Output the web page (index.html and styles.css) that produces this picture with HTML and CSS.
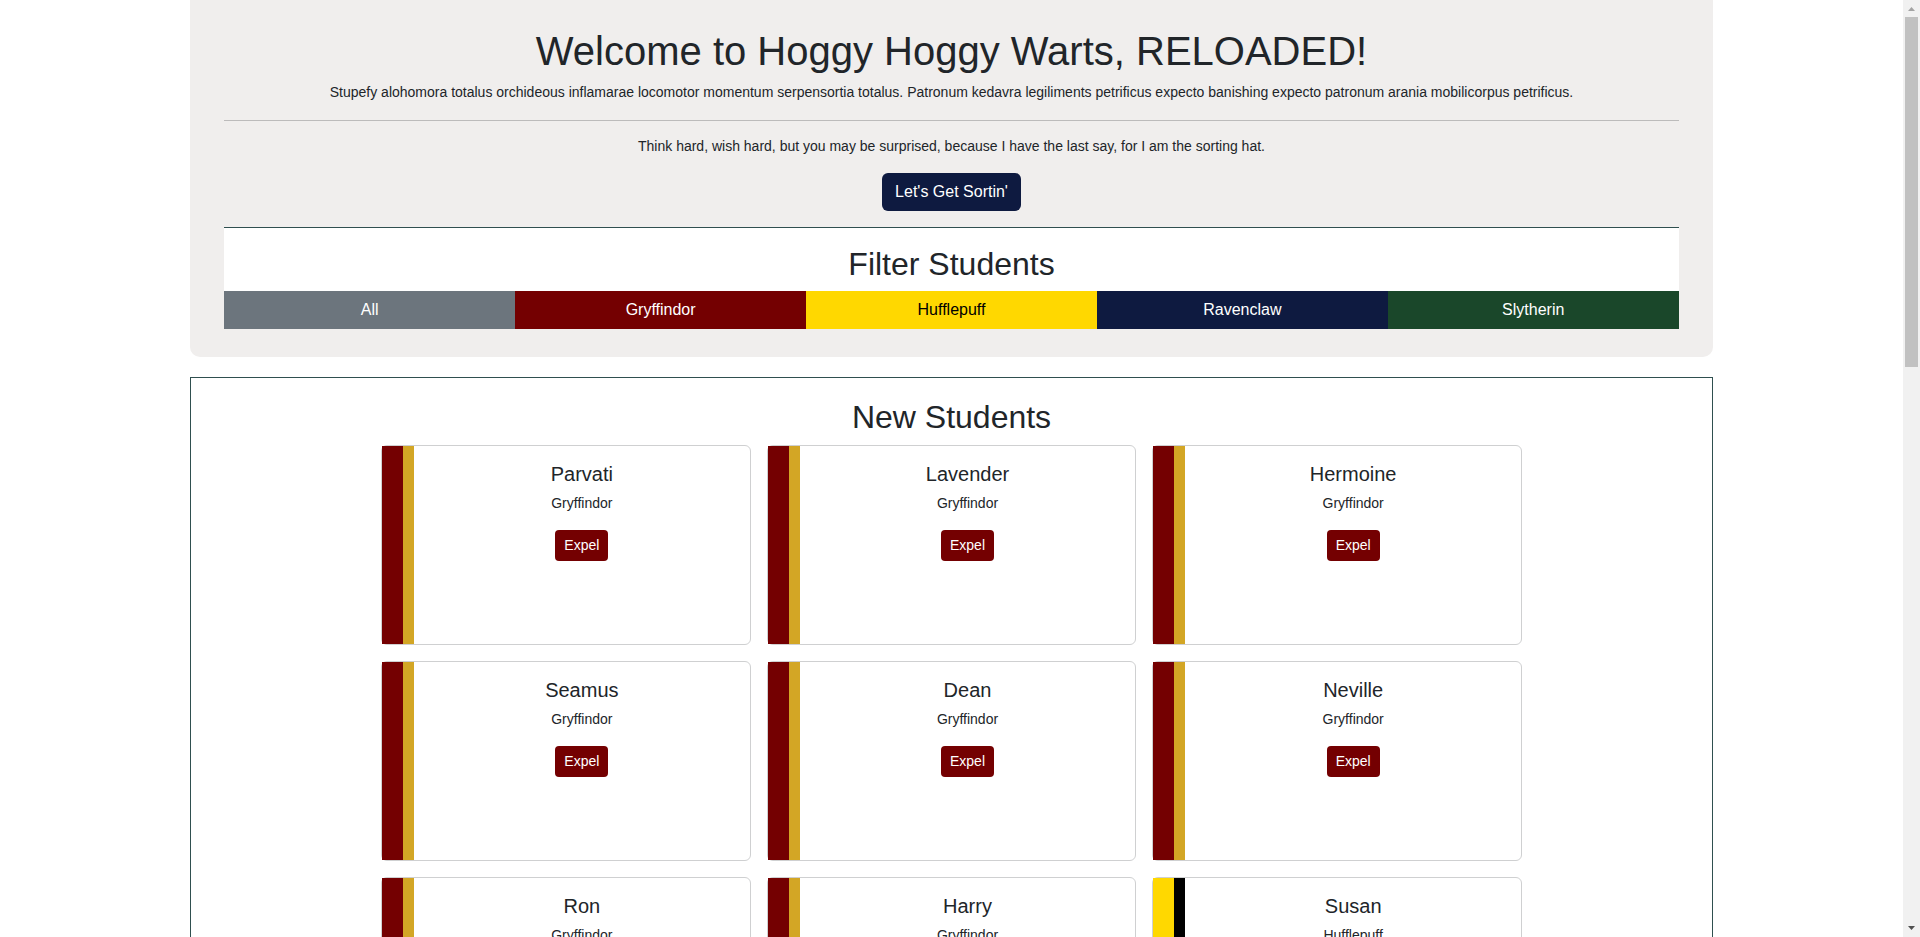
FILE: index.html
```html
<!DOCTYPE html>
<html lang="en">
<head>
  <meta charset="utf-8">
  <meta name="viewport" content="width=device-width, initial-scale=1">
  <title>Hoggy Hoggy Warts</title>
  <link rel="stylesheet" href="styles.css">
</head>
<body>
  <div class="viewport">
    <main class="page">
      <header class="hero">
        <h1 class="hero-title">Welcome to Hoggy Hoggy Warts, RELOADED!</h1>
        <p class="text">Stupefy alohomora totalus orchideous inflamarae locomotor momentum serpensortia totalus. Patronum kedavra legiliments petrificus expecto banishing expecto patronum arania mobilicorpus petrificus.</p>
        <hr class="divider">
        <p class="text">Think hard, wish hard, but you may be surprised, because I have the last say, for I am the sorting hat.</p>
        <button type="button" class="btn btn-sort">Let's Get Sortin'</button>
        <section class="filter">
          <h2 class="section-title">Filter Students</h2>
          <div class="filter-buttons">
            <button type="button" class="btn all">All</button>
            <button type="button" class="btn gryffindor">Gryffindor</button>
            <button type="button" class="btn hufflepuff">Hufflepuff</button>
            <button type="button" class="btn ravenclaw">Ravenclaw</button>
            <button type="button" class="btn slytherin">Slytherin</button>
          </div>
        </section>
      </header>

      <section class="students">
        <h2 class="section-title">New Students</h2>
        <div class="cards">
          <article class="card card-gryffindor">
            <div class="card-body"><h3 class="card-title">Parvati</h3><p class="text">Gryffindor</p><button type="button" class="btn-expel">Expel</button></div>
          </article>
          <article class="card card-gryffindor">
            <div class="card-body"><h3 class="card-title">Lavender</h3><p class="text">Gryffindor</p><button type="button" class="btn-expel">Expel</button></div>
          </article>
          <article class="card card-gryffindor">
            <div class="card-body"><h3 class="card-title">Hermoine</h3><p class="text">Gryffindor</p><button type="button" class="btn-expel">Expel</button></div>
          </article>
          <article class="card card-gryffindor">
            <div class="card-body"><h3 class="card-title">Seamus</h3><p class="text">Gryffindor</p><button type="button" class="btn-expel">Expel</button></div>
          </article>
          <article class="card card-gryffindor">
            <div class="card-body"><h3 class="card-title">Dean</h3><p class="text">Gryffindor</p><button type="button" class="btn-expel">Expel</button></div>
          </article>
          <article class="card card-gryffindor">
            <div class="card-body"><h3 class="card-title">Neville</h3><p class="text">Gryffindor</p><button type="button" class="btn-expel">Expel</button></div>
          </article>
          <article class="card card-gryffindor">
            <div class="card-body"><h3 class="card-title">Ron</h3><p class="text">Gryffindor</p><button type="button" class="btn-expel">Expel</button></div>
          </article>
          <article class="card card-gryffindor">
            <div class="card-body"><h3 class="card-title">Harry</h3><p class="text">Gryffindor</p><button type="button" class="btn-expel">Expel</button></div>
          </article>
          <article class="card card-hufflepuff">
            <div class="card-body"><h3 class="card-title">Susan</h3><p class="text">Hufflepuff</p><button type="button" class="btn-expel">Expel</button></div>
          </article>
        </div>
      </section>
    </main>
    <div class="scrollbar" aria-hidden="true">
      <svg class="arrow" viewBox="0 0 17 17"><path d="M5 11h7L8.500 7z" fill="#a3a3a3"/></svg>
      <div class="thumb"></div>
      <svg class="arrow arrow-down" viewBox="0 0 17 17"><path d="M5 6h7L8.500 10z" fill="#505050"/></svg>
    </div>
  </div>
</body>
</html>
```
FILE: styles.css
```css
*,
*::before {
  box-sizing: border-box;
}

body {
  margin: 0;
  background: #fff;
  color: #212529;
  font-family: "Liberation Sans", Arial, sans-serif;
  font-size: 14px;
  line-height: 18px;
}

.viewport {
  display: grid;
  grid-template-columns: 1fr 17px;
  height: 100vh;
}

.page {
  overflow-y: auto;
  scrollbar-width: none;
  padding: 0 10%;
}

.hero {
  padding: 27px 34px 28px;
  margin-bottom: 20px;
  border-radius: 0 0 10px 10px;
  background: #f0eeed;
  text-align: center;
}

.hero-title {
  margin: 0 0 8px;
  font-size: 40px;
  font-weight: 400;
  line-height: 48px;
}

.text {
  margin: 0 0 18px;
}

.divider {
  height: 1px;
  margin: 19px 0 16px;
  border: 0;
  background: #bcbbbb;
}

.section-title {
  margin: 0;
  padding: 17px 0 8px;
  font-size: 32px;
  font-weight: 400;
  line-height: 38px;
  text-align: center;
}

.btn {
  height: 38px;
  padding: 0 13px;
  border: 0;
  color: #fff;
  font-family: inherit;
  font-size: 16px;
  line-height: 24px;
  cursor: pointer;
}

.btn-sort {
  display: block;
  margin: 0 auto 16px;
  border-radius: 6px;
  background: #0e1a40;
}

.filter {
  border-top: 1px solid #2f4f4f;
  background: #fff;
}

.filter-buttons {
  display: flex;
}

.filter-buttons .btn {
  flex: 1;
}

.all {
  background: #6c757d;
}

.gryffindor {
  background: #740001;
}

.filter-buttons .hufflepuff {
  background: #ffd800;
  color: #000;
}

.ravenclaw {
  background: #0e1a40;
}

.slytherin {
  background: #1a472a;
}

.students {
  padding: 3px 16px 16px;
  border: 1px solid #2f4f4f;
}

.cards {
  display: grid;
  grid-template-columns: repeat(3, 1fr);
  gap: 16px;
  max-width: 1141px;
  margin: 1px auto 0;
}

.card {
  display: flex;
  min-height: 200px;
  border: 1px solid #cfd0d1;
  border-radius: 6px;
}

.card::before {
  content: "";
  width: 32px;
  border-right: 11px solid #d3a625;
  background: #740001;
}

.card-hufflepuff::before {
  border-right-color: #000;
  background: #ffd800;
}

.card-body {
  flex: 1;
  padding: 16px;
  text-align: center;
}

.card-title {
  margin: 0 0 8px;
  font-size: 20px;
  font-weight: 400;
  line-height: 24px;
}

.btn-expel {
  height: 31px;
  padding: 0 9px;
  border: 0;
  border-radius: 4px;
  background: #740001;
  color: #fff;
  font-family: inherit;
  font-size: 14px;
  line-height: 21px;
  cursor: pointer;
}

.scrollbar {
  display: flex;
  flex-direction: column;
  background: #f1f1f1;
}

.arrow {
  width: 17px;
  height: 17px;
}

.arrow-down {
  margin-top: auto;
}

.thumb {
  height: 350px;
  margin: 0 2px;
  background: #c1c1c1;
}
```
